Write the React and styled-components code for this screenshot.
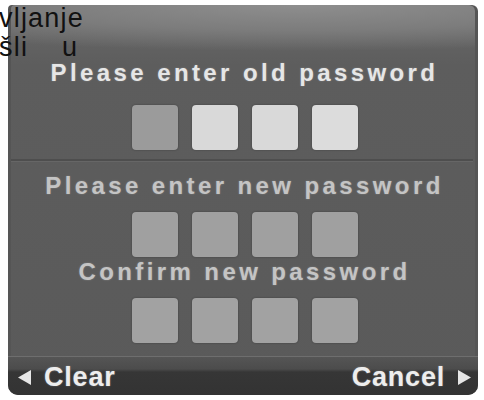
import React from 'react'
import styled, { createGlobalStyle } from 'styled-components'

const GlobalStyle = createGlobalStyle`
  html, body {
    margin: 0;
    padding: 0;
    background: #ffffff;
  }
  body {
    font-family: "Liberation Sans", Arial, sans-serif;
  }
`

const Page = styled.div`
  position: relative;
  width: 484px;
  height: 400px;
  overflow: hidden;
  background: #fff;
`

const Panel = styled.div`
  margin: 5px 6px 0 8px;
  width: 470px;
  height: 390px;
  border-radius: 4px 6px 10px 10px;
  overflow: hidden;
  display: flex;
  flex-direction: column;
  background:
    radial-gradient(ellipse 520px 46px at 62% 0px, #8e8e8e 0%, #7c7c7c 55%, rgba(110,110,110,0) 100%),
    linear-gradient(#6a6a6a 0px, #5d5d5d 60px, #5a5a5a 100%);
  box-shadow: inset 3px 0 0 #555, inset -3px 0 0 #555;
`

const Section = styled.div`
  display: flex;
  flex-direction: column;
  align-items: center;
  padding-top: ${p => p.$top}px;
`

const Heading = styled.div`
  font-size: 24px;
  line-height: 28px;
  font-weight: bold;
  letter-spacing: 3.4px;
  color: ${p => (p.$bright ? '#e6e6e6' : '#c4c4c4')};
  text-shadow: 0 0 2px rgba(255, 255, 255, 0.25);
  white-space: nowrap;
  padding-left: 3px;
`

const Boxes = styled.div`
  display: flex;
  gap: 14px;
  margin-top: ${p => p.$gap}px;
  margin-left: 4px;
`

const Box = styled.div`
  width: 46px;
  height: 45px;
  border-radius: 4px;
  background: ${p => p.$tone};
  box-shadow: 0 0 2px rgba(0, 0, 0, 0.35);
`

const Divider = styled.div`
  margin: 9px 5px 0 3px;
  height: 2px;
  background: #4e4e4e;
  border-bottom: 1px solid #666;
`

const Footer = styled.div`
  margin-top: auto;
  height: 38px;
  display: flex;
  align-items: center;
  justify-content: space-between;
  padding: 0 6px 0 9px;
  border-top: 1px solid #6e6e6e;
  background: linear-gradient(#555 0px, #4c4c4c 12px, #363636 15px, #333 100%);
`

const FootButton = styled.div`
  display: flex;
  align-items: center;
  gap: 12px;
  font-size: 27px;
  font-weight: bold;
  letter-spacing: 0.8px;
  color: #ededed;
  text-shadow: 0 0 2px rgba(255, 255, 255, 0.3);
  margin-top: 2px;
`

const Arrow = ({ dir }) => (
  <svg width="15" height="17" viewBox="0 0 15 17">
    {dir === 'left' ? (
      <polygon points="14,1 14,16 1,8.5" fill="#e6e6e6" />
    ) : (
      <polygon points="1,1 1,16 14,8.5" fill="#e6e6e6" />
    )}
  </svg>
)

const Overlay = styled.div`
  position: absolute;
  left: -1px;
  top: 4px;
  font-family: "Liberation Sans", Arial, sans-serif;
  font-size: 27px;
  line-height: 29px;
  letter-spacing: 1.2px;
  color: #111;
  white-space: pre;
`

const Gap = styled.span`
  margin-left: 34px;
`

const rows = [
  { label: 'Please enter old password', bright: true, tones: ['#9b9b9b', '#d9d9d9', '#d9d9d9', '#dcdcdc'] },
  { label: 'Please enter new password', tones: ['#a0a0a0', '#a0a0a0', '#a0a0a0', '#a0a0a0'] },
  { label: 'Confirm new password', tones: ['#a2a2a2', '#a2a2a2', '#a2a2a2', '#a2a2a2'] },
]

export default function App() {
  return (
    <Page>
      <GlobalStyle />
      <Panel>
        <Section $top={54}>
          <Heading $bright>{rows[0].label}</Heading>
          <Boxes $gap={18}>
            {rows[0].tones.map((t, i) => <Box key={i} $tone={t} />)}
          </Boxes>
        </Section>
        <Divider />
        <Section $top={10}>
          <Heading>{rows[1].label}</Heading>
          <Boxes $gap={12}>
            {rows[1].tones.map((t, i) => <Box key={i} $tone={t} />)}
          </Boxes>
        </Section>
        <Section $top={1}>
          <Heading>{rows[2].label}</Heading>
          <Boxes $gap={12}>
            {rows[2].tones.map((t, i) => <Box key={i} $tone={t} />)}
          </Boxes>
        </Section>
        <Footer>
          <FootButton>
            <Arrow dir="left" />
            Clear
          </FootButton>
          <FootButton>
            Cancel
            <Arrow dir="right" />
          </FootButton>
        </Footer>
      </Panel>
      <Overlay>
        {'vljanje\nšli'}
        <Gap>u</Gap>
      </Overlay>
    </Page>
  )
}
